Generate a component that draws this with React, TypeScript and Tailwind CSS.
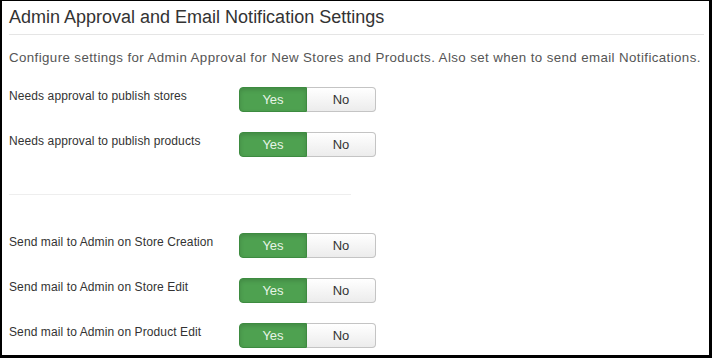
import React from "react";

function Toggle() {
  return (
    <div className="flex h-[25px] w-[137px] shrink-0">
      <div className="flex w-[68px] items-center justify-center rounded-l-[4px] border border-[#3d8b40] bg-[#4ea150] text-[13px] text-[#e6f4e6] shadow-[inset_0_2px_4px_rgba(0,0,0,0.15)]">
        Yes
      </div>
      <div className="flex w-[69px] items-center justify-center rounded-r-[4px] border border-l-0 border-[#c4c4c4] bg-gradient-to-b from-white to-[#ececec] text-[13px] text-[#333]">
        No
      </div>
    </div>
  );
}

function Row({ label, className = "" }: { label: string; className?: string }) {
  return (
    <div className={"flex items-start " + className}>
      <div className="w-[230px] shrink-0 text-[12px] leading-[18px] tracking-[0.1px] text-[#333]">{label}</div>
      <Toggle />
    </div>
  );
}

export default function App() {
  return (
    <div
      className="h-[358px] w-[712px] overflow-hidden border-b-[3px] border-l-2 border-r-[3px] border-t border-black bg-white"
      style={{ fontFamily: '"Liberation Sans", Arial, sans-serif' }}
    >
      <div className="pl-[7px] pr-[5px]">
        <h2 className="border-b border-[#e5e5e5] pb-[5px] pt-[4px] text-[18px] leading-[24px] text-[#333]">
          Admin Approval and Email Notification Settings
        </h2>
        <p className="mt-[14px] whitespace-nowrap text-[13.3px] leading-[18px] tracking-[0.4px] text-[#555]">
          Configure settings for Admin Approval for New Stores and Products. Also set when to send email Notifications.
        </p>
        <Row label="Needs approval to publish stores" className="mt-[20px]" />
        <Row label="Needs approval to publish products" className="mt-[20px]" />
        <div className="mt-[37px] h-px w-[342px] bg-[#eeeeee]" />
        <Row label="Send mail to Admin on Store Creation" className="mt-[38px]" />
        <Row label="Send mail to Admin on Store Edit" className="mt-[20px]" />
        <Row label="Send mail to Admin on Product Edit" className="mt-[20px]" />
      </div>
    </div>
  );
}
